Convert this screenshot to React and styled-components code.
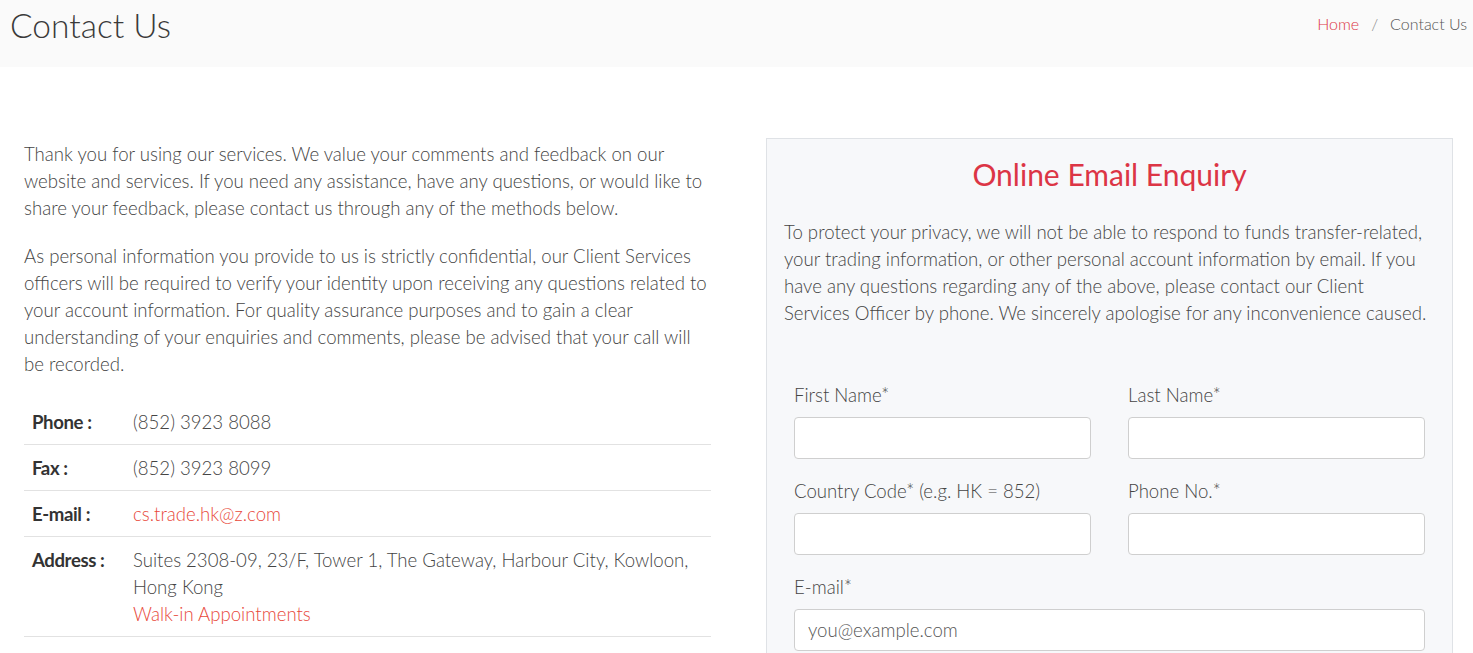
import styled, { createGlobalStyle } from 'styled-components';

const GlobalStyle = createGlobalStyle`
  body {
    margin: 0;
    background: #fff;
    font-family: 'Source Sans Pro', Lato, 'Liberation Sans', sans-serif;
    font-weight: 300;
    color: #444;
  }
  * {
    box-sizing: border-box;
  }
`;

const PageHeader = styled.header`
  display: flex;
  justify-content: space-between;
  align-items: flex-start;
  height: 67px;
  padding: 3px 6px 0 10px;
  background: #fafafa;
`;

const PageTitle = styled.h1`
  margin: 0;
  font-size: 33.5px;
  line-height: 44px;
  font-weight: 300;
  color: #3a3a3a;
`;

const Breadcrumb = styled.nav`
  display: flex;
  gap: 12px;
  margin-top: 9px;
  font-size: 16px;
  line-height: 24px;
  color: #555;
`;

const Crumb = styled.span`
  color: ${(p) => (p.$active ? '#dc3545' : p.$muted ? '#888' : '#555')};
`;

const Main = styled.main`
  display: grid;
  grid-template-columns: 1fr 1fr;
  gap: 55px;
  padding: 72px 20px 0 24px;
  align-items: start;
`;

const Column = styled.div`
  padding-top: 2px;
`;

const Text = styled.p`
  margin: 0 0 21px;
  padding-right: ${(p) => p.$inset || 0}px;
  font-size: 18.6px;
  line-height: 27px;
  color: #444;
`;

const InfoTable = styled.div`
  display: flex;
  flex-direction: column;
  margin-top: 1px;
`;

const InfoRow = styled.div`
  display: grid;
  grid-template-columns: 101px 1fr;
  padding: 10px 0 8px 8px;
  border-bottom: 1px solid #e2e2e2;
  font-size: 18.6px;
  line-height: 27px;
`;

const InfoLabel = styled.span`
  font-weight: 700;
  color: #333;
  letter-spacing: -0.4px;
`;

const InfoValue = styled.span`
  color: #444;
`;

const RedLink = styled.a`
  display: block;
  color: #e8483a;
  text-decoration: none;
`;

const Panel = styled.section`
  margin-top: -1px;
  padding: 17px 17px 0;
  background: #f7f8fa;
  border: 1px solid #dfe2e6;
  border-bottom: none;
  min-height: 515px;
`;

const PanelTitle = styled.h2`
  margin: 0 0 27px;
  text-align: center;
  font-size: 30px;
  line-height: 36px;
  font-weight: 400;
  color: #dc3545;
`;

const Form = styled.form`
  display: grid;
  grid-template-columns: 1fr 1fr;
  column-gap: 37px;
  row-gap: 19px;
  padding: 34px 10px 0;
`;

const Field = styled.label`
  display: flex;
  flex-direction: column;
  gap: 8px;
  grid-column: ${(p) => (p.$wide ? '1 / -1' : 'auto')};
  font-size: 18.6px;
  line-height: 27px;
  color: #444;
`;

const Input = styled.input`
  height: 42px;
  padding: 0 13px;
  border: 1px solid #cfcfcf;
  border-radius: 4px;
  background: #fff;
  font-family: inherit;
  font-weight: 300;
  font-size: 18.6px;
  color: #444;
  outline: none;

  &::placeholder {
    color: #555;
  }
`;

export default function App() {
  return (
    <>
      <GlobalStyle />
      <PageHeader>
        <PageTitle>Contact Us</PageTitle>
        <Breadcrumb>
          <Crumb $active>Home</Crumb>
          <Crumb $muted>/</Crumb>
          <Crumb>Contact Us</Crumb>
        </Breadcrumb>
      </PageHeader>

      <Main>
        <Column>
          <Text>
            Thank you for using our services. We value your comments and feedback on our
            website and services. If you need any assistance, have any questions, or would like to
            share your feedback, please contact us through any of the methods below.
          </Text>
          <Text>
            As personal information you provide to us is strictly confidential, our Client Services
            officers will be required to verify your identity upon receiving any questions related to
            your account information. For quality assurance purposes and to gain a clear
            understanding of your enquiries and comments, please be advised that your call will
            be recorded.
          </Text>
          <InfoTable>
            <InfoRow>
              <InfoLabel>Phone :</InfoLabel>
              <InfoValue>(852) 3923 8088</InfoValue>
            </InfoRow>
            <InfoRow>
              <InfoLabel>Fax :</InfoLabel>
              <InfoValue>(852) 3923 8099</InfoValue>
            </InfoRow>
            <InfoRow>
              <InfoLabel>E-mail :</InfoLabel>
              <InfoValue>
                <RedLink href="#">cs.trade.hk@z.com</RedLink>
              </InfoValue>
            </InfoRow>
            <InfoRow>
              <InfoLabel>Address :</InfoLabel>
              <InfoValue>
                Suites 2308-09, 23/F, Tower 1, The Gateway, Harbour City, Kowloon, Hong Kong
                <RedLink href="#">Walk-in Appointments</RedLink>
              </InfoValue>
            </InfoRow>
          </InfoTable>
        </Column>

        <Panel>
          <PanelTitle>Online Email Enquiry</PanelTitle>
          <Text $inset={4}>
            To protect your privacy, we will not be able to respond to funds transfer-related,
            your trading information, or other personal account information by email. If you
            have any questions regarding any of the above, please contact our Client
            Services Officer by phone. We sincerely apologise for any inconvenience caused.
          </Text>
          <Form>
            <Field>
              First Name*
              <Input type="text" />
            </Field>
            <Field>
              Last Name*
              <Input type="text" />
            </Field>
            <Field>
              Country Code* (e.g. HK = 852)
              <Input type="text" />
            </Field>
            <Field>
              Phone No.*
              <Input type="text" />
            </Field>
            <Field $wide>
              E-mail*
              <Input type="email" placeholder="you@example.com" />
            </Field>
          </Form>
        </Panel>
      </Main>
    </>
  );
}
